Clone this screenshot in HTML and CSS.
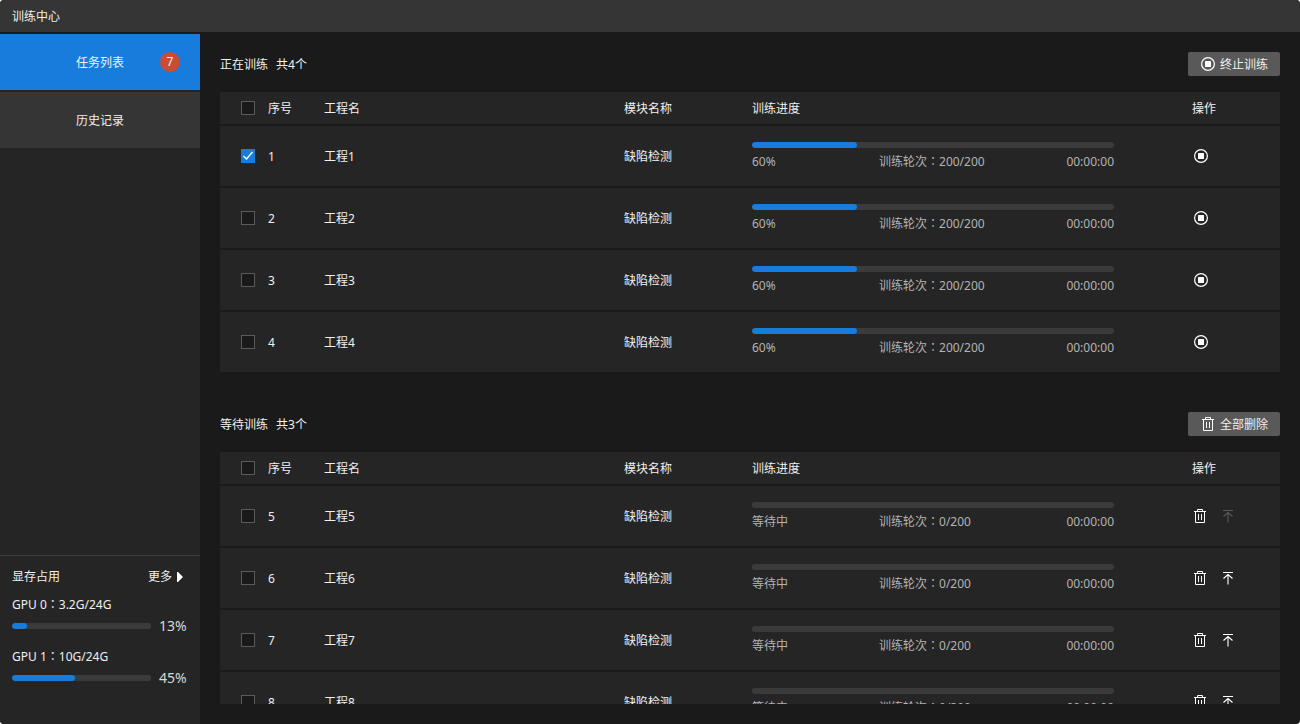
FILE: index.html
```html
<!DOCTYPE html>
<html lang="zh-CN">
<head>
<meta charset="utf-8">
<meta name="viewport" content="width=device-width, initial-scale=1">
<title>训练中心</title>
<link rel="stylesheet" href="styles.css">
</head>
<body>
<svg class="sprite" aria-hidden="true">
  <symbol id="stop" viewBox="0 0 16 16">
    <circle cx="8" cy="8" r="6.4" fill="none" stroke="currentColor" stroke-width="1.2"/>
    <rect x="5" y="5" width="6" height="6" rx="0.5" fill="currentColor"/>
  </symbol>
  <symbol id="trash" viewBox="0 0 16 16">
    <path d="M2 3.5H14M5.5 3.5V1.5H10.5V3.5M3.5 3.5V14.5H12.5V3.5M6.5 6V12M9.5 6V12" fill="none" stroke="currentColor"/>
  </symbol>
  <symbol id="top" viewBox="0 0 16 16">
    <path d="M3 2.5H13" fill="none" stroke="currentColor"/>
    <path d="M3.5 8.5L8 4.5L12.5 8.5M8 4.5V14.5" fill="none" stroke="currentColor" stroke-width="1.1"/>
  </symbol>
</svg>
<div class="app">
  <header class="titlebar">训练中心</header>
  <div class="body">
    <aside class="sidebar">
      <nav class="nav">
        <a class="nav-item active" href="#tasks">任务列表<span class="badge">7</span></a>
        <a class="nav-item" href="#history">历史记录</a>
      </nav>
      <section class="memory">
        <div class="memory-head"><span>显存占用</span><button class="more" type="button">更多<svg class="caret" viewBox="0 0 6 10" aria-hidden="true"><path d="M0 0H1L6 5L1 10H0Z" fill="currentColor"/></svg></button></div>
        <div class="gpu">
          <label for="gpu0">GPU 0<span class="colon" lang="zh-TW">：</span>3.2G/24G</label>
          <div class="gpu-usage"><progress id="gpu0" class="bar" value="11" max="100"></progress><span>13%</span></div>
        </div>
        <div class="gpu">
          <label for="gpu1">GPU 1<span class="colon" lang="zh-TW">：</span>10G/24G</label>
          <div class="gpu-usage"><progress id="gpu1" class="bar" value="45" max="100"></progress><span>45%</span></div>
        </div>
      </section>
    </aside>
    <main class="main">
      <section class="group">
        <div class="group-head"><h2><span>正在训练</span><span>共4个</span></h2><button class="btn" type="button"><svg class="icon" aria-hidden="true"><use href="#stop"/></svg><span>终止训练</span></button></div>
        <div class="table-wrap">
        <table class="tasks">
          <colgroup><col class="c-check"><col class="c-no"><col><col class="c-module"><col class="c-progress"><col class="c-action"></colgroup>
          <thead><tr><th class="check"><input type="checkbox" aria-label="全选"></th><th>序号</th><th>工程名</th><th>模块名称</th><th>训练进度</th><th>操作</th></tr></thead>
          <tbody>
            <tr><td class="check"><input type="checkbox" aria-label="工程1" checked></td><td>1</td><td>工程1</td><td>缺陷检测</td><td class="progress"><progress class="bar" value="29" max="100" aria-label="训练进度"></progress><div class="stats"><span>60%</span><span>训练轮次<span class="colon" lang="zh-TW">：</span>200/200</span><span>00:00:00</span></div></td><td class="ops"><div class="actions"><button class="act stop" type="button" aria-label="终止"><svg class="icon"><use href="#stop"/></svg></button></div></td></tr>
            <tr><td class="check"><input type="checkbox" aria-label="工程2"></td><td>2</td><td>工程2</td><td>缺陷检测</td><td class="progress"><progress class="bar" value="29" max="100" aria-label="训练进度"></progress><div class="stats"><span>60%</span><span>训练轮次<span class="colon" lang="zh-TW">：</span>200/200</span><span>00:00:00</span></div></td><td class="ops"><div class="actions"><button class="act stop" type="button" aria-label="终止"><svg class="icon"><use href="#stop"/></svg></button></div></td></tr>
            <tr><td class="check"><input type="checkbox" aria-label="工程3"></td><td>3</td><td>工程3</td><td>缺陷检测</td><td class="progress"><progress class="bar" value="29" max="100" aria-label="训练进度"></progress><div class="stats"><span>60%</span><span>训练轮次<span class="colon" lang="zh-TW">：</span>200/200</span><span>00:00:00</span></div></td><td class="ops"><div class="actions"><button class="act stop" type="button" aria-label="终止"><svg class="icon"><use href="#stop"/></svg></button></div></td></tr>
            <tr><td class="check"><input type="checkbox" aria-label="工程4"></td><td>4</td><td>工程4</td><td>缺陷检测</td><td class="progress"><progress class="bar" value="29" max="100" aria-label="训练进度"></progress><div class="stats"><span>60%</span><span>训练轮次<span class="colon" lang="zh-TW">：</span>200/200</span><span>00:00:00</span></div></td><td class="ops"><div class="actions"><button class="act stop" type="button" aria-label="终止"><svg class="icon"><use href="#stop"/></svg></button></div></td></tr>
          </tbody>
        </table>
        </div>
      </section>
      <section class="group waiting">
        <div class="group-head"><h2><span>等待训练</span><span>共3个</span></h2><button class="btn" type="button"><svg class="icon" aria-hidden="true"><use href="#trash"/></svg><span>全部删除</span></button></div>
        <div class="table-wrap">
        <table class="tasks">
          <colgroup><col class="c-check"><col class="c-no"><col><col class="c-module"><col class="c-progress"><col class="c-action"></colgroup>
          <thead><tr><th class="check"><input type="checkbox" aria-label="全选"></th><th>序号</th><th>工程名</th><th>模块名称</th><th>训练进度</th><th>操作</th></tr></thead>
          <tbody>
            <tr><td class="check"><input type="checkbox" aria-label="工程5"></td><td>5</td><td>工程5</td><td>缺陷检测</td><td class="progress"><progress class="bar" value="0" max="100" aria-label="训练进度"></progress><div class="stats"><span>等待中</span><span>训练轮次<span class="colon" lang="zh-TW">：</span>0/200</span><span>00:00:00</span></div></td><td class="ops"><div class="actions"><button class="act" type="button" aria-label="删除"><svg class="icon"><use href="#trash"/></svg></button><button class="act" type="button" aria-label="置顶" disabled><svg class="icon"><use href="#top"/></svg></button></div></td></tr>
            <tr><td class="check"><input type="checkbox" aria-label="工程6"></td><td>6</td><td>工程6</td><td>缺陷检测</td><td class="progress"><progress class="bar" value="0" max="100" aria-label="训练进度"></progress><div class="stats"><span>等待中</span><span>训练轮次<span class="colon" lang="zh-TW">：</span>0/200</span><span>00:00:00</span></div></td><td class="ops"><div class="actions"><button class="act" type="button" aria-label="删除"><svg class="icon"><use href="#trash"/></svg></button><button class="act" type="button" aria-label="置顶"><svg class="icon"><use href="#top"/></svg></button></div></td></tr>
            <tr><td class="check"><input type="checkbox" aria-label="工程7"></td><td>7</td><td>工程7</td><td>缺陷检测</td><td class="progress"><progress class="bar" value="0" max="100" aria-label="训练进度"></progress><div class="stats"><span>等待中</span><span>训练轮次<span class="colon" lang="zh-TW">：</span>0/200</span><span>00:00:00</span></div></td><td class="ops"><div class="actions"><button class="act" type="button" aria-label="删除"><svg class="icon"><use href="#trash"/></svg></button><button class="act" type="button" aria-label="置顶"><svg class="icon"><use href="#top"/></svg></button></div></td></tr>
            <tr><td class="check"><input type="checkbox" aria-label="工程8"></td><td>8</td><td>工程8</td><td>缺陷检测</td><td class="progress"><progress class="bar" value="0" max="100" aria-label="训练进度"></progress><div class="stats"><span>等待中</span><span>训练轮次<span class="colon" lang="zh-TW">：</span>0/200</span><span>00:00:00</span></div></td><td class="ops"><div class="actions"><button class="act" type="button" aria-label="删除"><svg class="icon"><use href="#trash"/></svg></button><button class="act" type="button" aria-label="置顶"><svg class="icon"><use href="#top"/></svg></button></div></td></tr>
          </tbody>
        </table>
        </div>
      </section>
    </main>
  </div>
</div>
</body>
</html>
```

FILE: styles.css
```css
* { box-sizing: border-box; }

body {
  margin: 0;
  background: #fff;
  color: #f0f0f0;
  font: 12px/18px "Noto Sans", "Noto Sans CJK SC", sans-serif;
}

button { font: inherit; color: inherit; border: 0; padding: 0; background: none; }

.sprite { display: none; }
.colon { font-family: "Noto Sans CJK TC", sans-serif; line-height: 1; }
.icon { display: block; width: 16px; height: 16px; color: #fff; }

.app {
  display: flex;
  flex-direction: column;
  height: 100vh;
  overflow: hidden;
  border-radius: 4px;
  background: #1a1a1a;
}

.titlebar {
  display: flex;
  align-items: center;
  height: 32px;
  padding: 2px 12px 0;
  background: #353535;
}

.body { display: flex; flex: 1; min-height: 0; }

.sidebar {
  display: flex;
  flex-direction: column;
  width: 200px;
  margin-top: 2px;
  background: #252525;
}

.nav { display: flex; flex-direction: column; gap: 2px; flex: 1; }
.nav-item {
  position: relative;
  display: flex;
  align-items: center;
  justify-content: center;
  height: 56px;
  padding-top: 2px;
  background: #353535;
  color: inherit;
  text-decoration: none;
}
.nav-item.active { background: #187cdc; }
.badge {
  position: absolute;
  top: 18px;
  right: 20px;
  width: 20px;
  height: 20px;
  border-radius: 50%;
  background: #cb4c33;
  line-height: 20px;
  text-align: center;
}

.memory { padding: 12px 12px 36px; border-top: 1px solid #3c3c3c; }
.memory-head { display: flex; justify-content: space-between; margin-bottom: 10px; }
.more { display: flex; align-items: center; gap: 5px; padding-right: 5px; }
.caret { width: 6px; height: 10px; color: #fff; }
.gpu + .gpu { margin-top: 12px; }
.gpu label { display: block; }
.gpu-usage {
  display: flex;
  align-items: center;
  gap: 8px;
  margin-top: 2px;
  font-size: 14px;
  line-height: 20px;
}
.gpu-usage .bar { flex: 1; min-width: 0; }
.gpu-usage span { min-width: 29px; color: #d8d8d8; }

.bar {
  display: block;
  appearance: none;
  width: 100%;
  height: 6px;
  border: 0;
  border-radius: 3px;
  overflow: hidden;
  background: #3b3b3b;
}
.bar::-webkit-progress-bar { background: #3b3b3b; border-radius: 3px; }
.bar::-webkit-progress-value { background: #187cdc; border-radius: 3px; }

.main {
  display: flex;
  flex-direction: column;
  flex: 1;
  min-width: 0;
  gap: 38px;
  padding: 20px;
}
.waiting { display: flex; flex-direction: column; flex: 1; min-height: 0; }
.waiting .table-wrap { flex: 1; min-height: 0; overflow-y: auto; scrollbar-width: none; }

.group-head {
  display: flex;
  align-items: center;
  justify-content: space-between;
  margin-bottom: 16px;
}
.group-head h2 {
  display: flex;
  gap: 8px;
  margin: 0;
  padding-top: 2px;
  font-size: 12px;
  font-weight: 400;
}

.btn {
  display: flex;
  align-items: center;
  gap: 4px;
  height: 24px;
  padding: 0 12px;
  border-radius: 2px;
  background: #595959;
}
.btn span { padding-top: 2px; }

.tasks { width: 100%; table-layout: fixed; border-collapse: separate; border-spacing: 0; }
.c-check { width: 48px; }
.c-no { width: 56px; }
.c-module { width: 128px; }
.c-progress { width: 440px; }
.c-action { width: 88px; }

.tasks th,
.tasks td {
  height: 62px;
  padding: 2px 0 0;
  border-bottom: 2px solid #1a1a1a;
  background: #252525;
  font-weight: 400;
  text-align: left;
}
.tasks th { height: 34px; }
.tasks .check { padding: 0 0 0 21px; }
.tasks .progress { padding: 16px 78px 0 0; vertical-align: top; }
.tasks .ops { padding: 0; }

.check input {
  display: block;
  appearance: none;
  width: 14px;
  height: 14px;
  margin: 0;
  border: 1px solid #595959;
  background: #1a1a1a;
}
.check input:checked {
  border-color: #187cdc;
  background: #187cdc url("data:image/svg+xml,%3Csvg xmlns='http://www.w3.org/2000/svg' viewBox='0 0 12 12'%3E%3Cpath d='M1.5 6L4.5 9L10.5 2' fill='none' stroke='white' stroke-width='1.3'/%3E%3C/svg%3E") center / 12px 12px no-repeat;
}

.stats {
  display: grid;
  grid-template-columns: 127px 1fr auto;
  margin-top: 5px;
  color: #b3b3b3;
}

.actions { display: flex; gap: 12px; }
.act:disabled .icon { color: #595959; }
.act.stop { padding: 0 1px; }
```
